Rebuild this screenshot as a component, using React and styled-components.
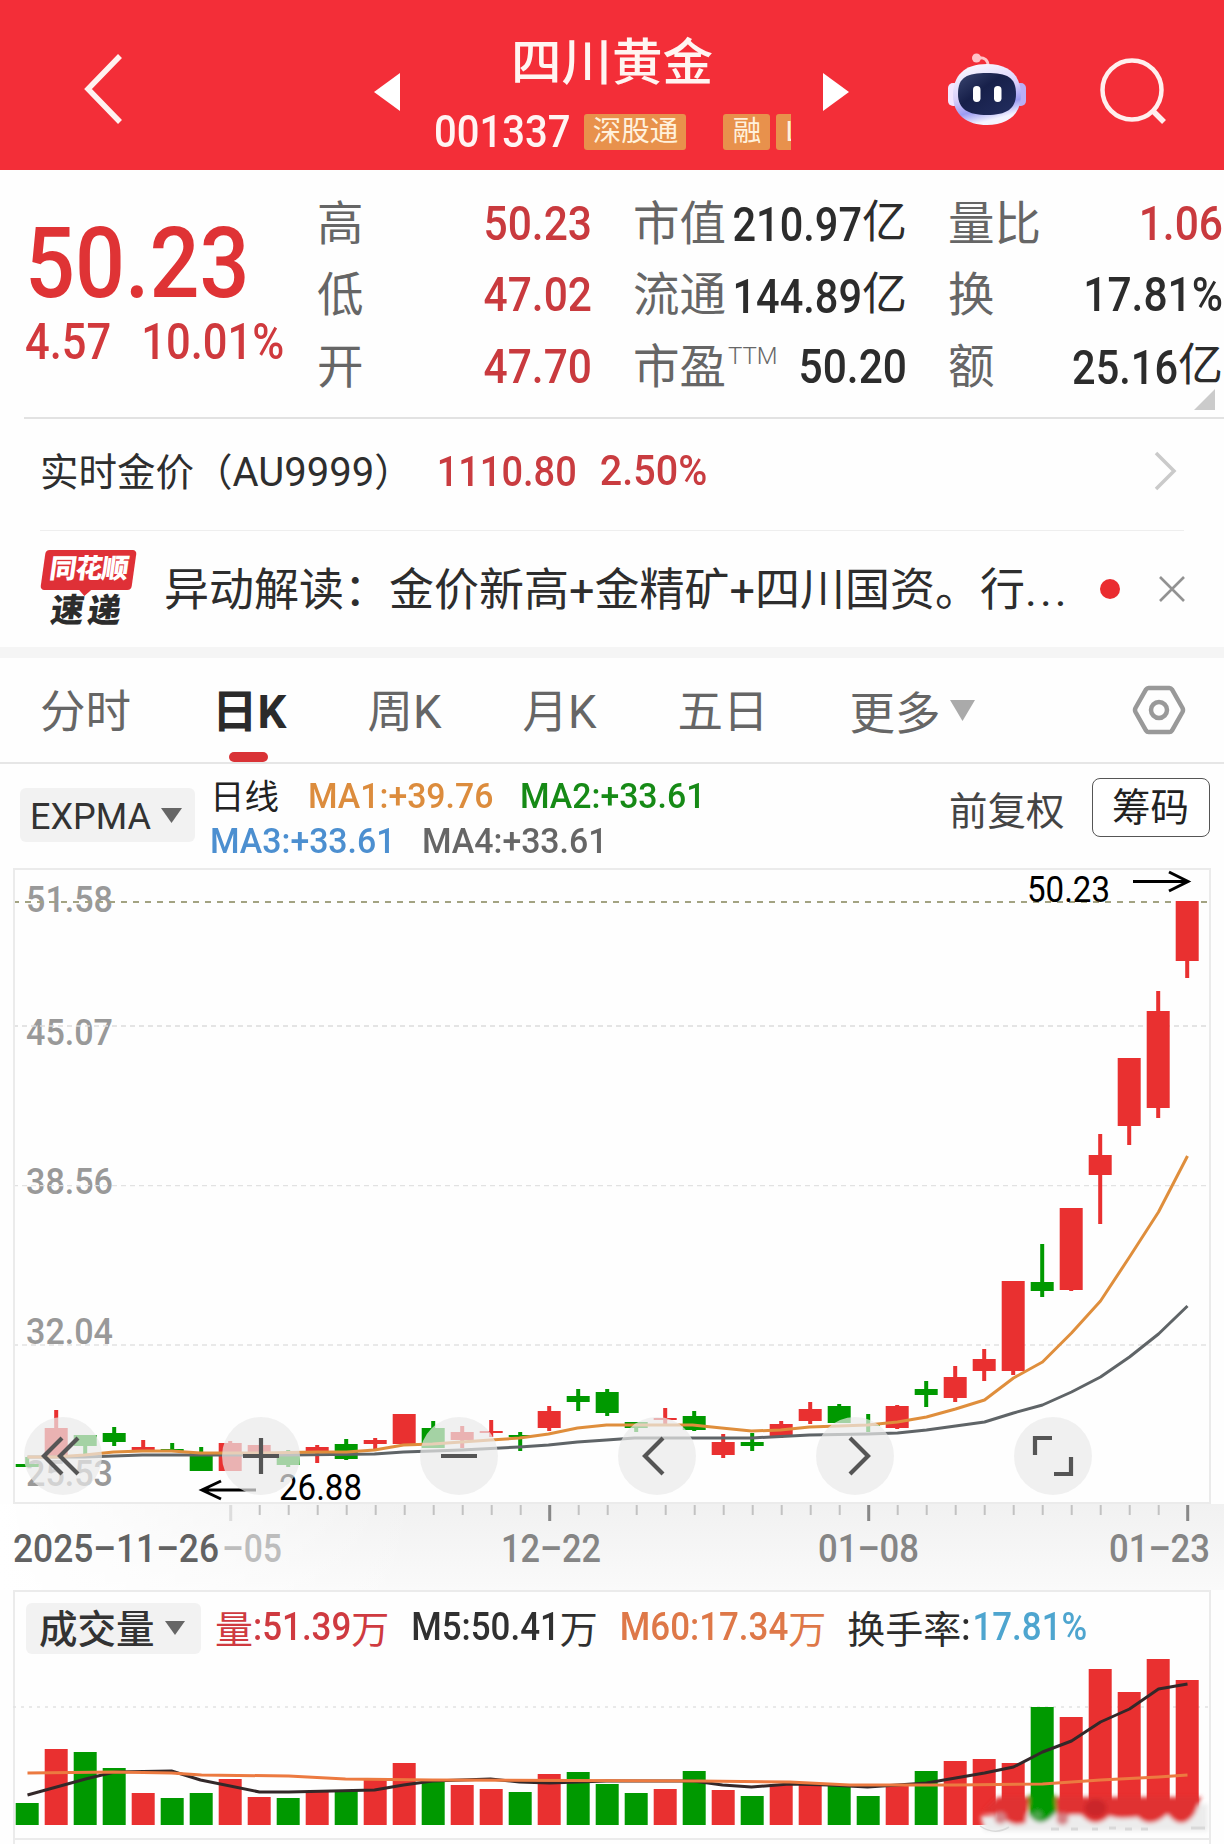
import React from "react";
import styled, { createGlobalStyle } from "styled-components";

const RED = "#e93030";
const GREEN = "#009900";
const STEP = 29;
const FIRST = 14.2;

// [up, high, bodyTop, bodyBottom, low] in page pixels
const candles = [
  [0, 1457, 1464, 1467, 1467], [1, 1410, 1428, 1456, 1456], [0, 1435, 1435, 1446, 1455],
  [0, 1427, 1433, 1442, 1446], [1, 1440, 1447, 1450, 1450], [0, 1443, 1449, 1451, 1451],
  [0, 1447, 1452, 1471, 1471], [1, 1441, 1443, 1471, 1471], [1, 1445, 1445, 1457, 1457],
  [0, 1450, 1452, 1465, 1467], [1, 1445, 1447, 1452, 1463], [0, 1439, 1444, 1459, 1460],
  [1, 1438, 1440, 1444, 1450], [1, 1414, 1414, 1444, 1444], [0, 1421, 1428, 1448, 1448],
  [1, 1426, 1432, 1440, 1448], [1, 1420, 1431, 1433, 1437], [0, 1432, 1435, 1437, 1451],
  [1, 1406, 1411, 1428, 1431], [0, 1389, 1396, 1402, 1411], [0, 1389, 1392, 1413, 1416],
  [0, 1422, 1422, 1428, 1432], [1, 1408, 1418, 1420, 1425], [0, 1411, 1416, 1430, 1431],
  [1, 1434, 1442, 1455, 1458], [0, 1433, 1442, 1446, 1451], [1, 1421, 1424, 1437, 1438],
  [1, 1402, 1409, 1421, 1424], [0, 1404, 1406, 1423, 1423], [0, 1414, 1424, 1426, 1432],
  [1, 1405, 1406, 1428, 1429], [0, 1381, 1389, 1395, 1407], [1, 1366, 1377, 1398, 1402],
  [1, 1349, 1359, 1371, 1381], [1, 1281, 1281, 1371, 1375], [0, 1244, 1282, 1291, 1297],
  [1, 1208, 1208, 1290, 1291], [1, 1134, 1155, 1175, 1224], [1, 1058, 1058, 1126, 1145],
  [1, 991, 1011, 1108, 1118], [1, 901, 901, 961, 978],
];

// bar heights of the volume panel
const volumes = [
  22, 76, 73, 57, 32, 27, 32, 46, 28, 27, 33, 35, 47, 62, 44, 40, 36, 33, 51, 53, 41,
  32, 36, 54, 35, 29, 41, 41, 39, 29, 40, 54, 64, 66, 62, 118, 108, 156, 133, 166, 145,
];

const ma1 = "28,1457 56,1457 85,1455 114,1452 143,1451 172,1451 201,1453 260,1453 318,1452 347,1452 375,1450 404,1445 433,1444 462,1442 491,1440 520,1438 549,1434 578,1428 607,1425 693,1425 722,1428 752,1431 781,1430 810,1427 839,1426 868,1425 898,1422 927,1417 956,1409 985,1400 1014,1378 1043,1362 1072,1333 1101,1301 1130,1257 1159,1212 1188,1156";
const ma4 = "28,1457 85,1457 143,1455 289,1455 375,1454 404,1452 462,1450 520,1447 549,1445 578,1442 607,1440 635,1438 752,1438 810,1435 868,1434 898,1433 927,1430 956,1426 985,1422 1014,1413 1043,1405 1072,1392 1101,1377 1130,1357 1159,1334 1188,1306";
const m5 = "28,1795 86,1779 115,1772 172,1771 201,1780 260,1792 289,1792 375,1790 404,1785 433,1781 491,1779 520,1782 550,1783 607,1781 694,1781 723,1785 752,1787 790,1784 830,1785 868,1787 898,1785 927,1783 956,1778 985,1773 1014,1767 1043,1752 1072,1741 1101,1722 1130,1709 1159,1689 1188,1684";
const m60 = "28,1773 115,1772 172,1773 202,1775 289,1776 346,1779 433,1780 700,1781 790,1782 850,1785 956,1785 1043,1784 1101,1780 1159,1777 1188,1775";

const grid = [
  { y: 1026, color: "#dcdcdc" },
  { y: 1185.7, color: "#e2e2e2" },
  { y: 1345, color: "#e2e2e2" },
];
const scale = [["51.58", 899], ["45.07", 1031.5], ["38.56", 1181], ["32.04", 1331], ["25.53", 1472.5]];

const tabs = ["分时", "日K", "周K", "月K", "五日"];

const center = (i) => FIRST + i * STEP;

function ChartText({ x, y, width, size, fill, weight = 500, children }) {
  return (
    <text
      transform={`translate(${x} ${y}) scale(1 1.08)`}
      y={size * 0.355}
      fontSize={size}
      fontWeight={weight}
      fill={fill}
      textLength={width}
      lengthAdjust="spacingAndGlyphs"
    >
      {children}
    </text>
  );
}

function Header() {
  return (
    <Bar>
      <Back>
        <svg width="42" height="72" viewBox="0 0 42 72" fill="none" stroke="#fff2f0" strokeWidth="5.5">
          <path d="M37 3 L5 36 L37 69" />
        </svg>
      </Back>
      <Triangle viewBox="0 0 26 40"><path d="M26 1 V39 L0 20Z" /></Triangle>
      <TitleBlock>
        <StockName>四川黄金</StockName>
        <CodeRow>
          <Num $size={40} $color="#fff4f3" $stretch={1.13}>001337</Num>
          <Tag $left={14} $width={102}>深股通</Tag>
          <Tag $left={37} $width={47}>融</Tag>
          <CutTag>L</CutTag>
        </CodeRow>
      </TitleBlock>
      <Triangle viewBox="0 0 26 40"><path d="M0 1 V39 L26 20Z" /></Triangle>
      <Robot />
      <svg width="70" height="70" viewBox="0 0 70 70" fill="none" stroke="#ffefee" strokeWidth="4.5">
        <circle cx="34" cy="34" r="29.5" />
        <path d="M54 54 L66 66" strokeWidth="5.5" />
      </svg>
    </Bar>
  );
}

function Robot() {
  return (
    <RobotSvg width="78" height="74" viewBox="0 0 78 74">
      <defs>
        <linearGradient id="shell" x1="0" y1="0" x2="0.3" y2="1">
          <stop offset="0" stopColor="#fff" />
          <stop offset="0.55" stopColor="#d9d0fb" />
          <stop offset="0.8" stopColor="#9c9cf2" />
          <stop offset="1" stopColor="#f4f4ff" />
        </linearGradient>
        <linearGradient id="visor" x1="0" y1="0" x2="1" y2="1">
          <stop offset="0" stopColor="#3a4570" />
          <stop offset="0.4" stopColor="#17204a" />
          <stop offset="1" stopColor="#232e60" />
        </linearGradient>
      </defs>
      <path d="M29 6 C37 5 40 8 40 14" fill="none" stroke="#ffc3c8" strokeWidth="3" />
      <circle cx="28.5" cy="6" r="4.5" fill="#ffc3c8" />
      <rect x="0" y="31" width="11" height="23" rx="5" fill="#f3e6ff" />
      <rect x="67" y="31" width="11" height="23" rx="5" fill="#b9aef6" />
      <path d="M39 12 C62 12 73 24 73 43 C73 63 59 73 39 73 C19 73 5 63 5 43 C5 24 16 12 39 12Z" fill="url(#shell)" />
      <path d="M39 21 C59 21 68 25 68 42 C68 57 58 63 39 63 C20 63 10 57 10 42 C10 25 19 21 39 21Z" fill="url(#visor)" />
      <rect x="25" y="34" width="7.5" height="16" rx="3.7" fill="#fff" />
      <rect x="46" y="34" width="7.5" height="16" rx="3.7" fill="#fff" />
    </RobotSvg>
  );
}

function Quote() {
  return (
    <QuoteGrid>
      <PriceBlock>
        <Price><Num $size={88} $stretch={1.12} $color="#df3335">50.23</Num></Price>
        <Change>
          <Num $size={43.5} $stretch={1.14} $color="#d2393c">4.57</Num>
          <Num $size={43.5} $stretch={1.14} $color="#cf393d">10.01%</Num>
        </Change>
      </PriceBlock>
      <Stats>
        <Stat label="高" value="50.23" up />
        <Stat label="低" value="47.02" up />
        <Stat label="开" value="47.70" up />
      </Stats>
      <Stats>
        <Stat label="市值" value="210.97" unit="亿" />
        <Stat label="流通" value="144.89" unit="亿" />
        <Stat label="市盈" sup="TTM" value="50.20" />
      </Stats>
      <Stats>
        <Stat label="量比" value="1.06" up />
        <Stat label="换" value="17.81%" />
        <Stat label="额" value="25.16" unit="亿" />
      </Stats>
      <Corner viewBox="0 0 21 21"><path d="M21 0 V21 H0Z" fill="#cbcbcb" /></Corner>
    </QuoteGrid>
  );
}

function Stat({ label, sup, value, unit, up }) {
  return (
    <StatRow>
      <StatLabel>{label}{sup && <Sup>{sup}</Sup>}</StatLabel>
      <StatValue>
        <Num $size={unit ? 41.5 : 42.5} $stretch={unit ? 1.18 : 1.15} $color={up ? "#c93a3e" : "#2c2c2c"}>{value}</Num>
        {unit && <Unit>{unit}</Unit>}
      </StatValue>
    </StatRow>
  );
}

function PriceChart() {
  return (
    <ChartBox>
      <svg width="1197" height="636" viewBox="0 868 1197 636">
        {scale.map(([label, y]) => (
          <ChartText key={label} x={13} y={y} width={87} size={35} fill="#999">{label}</ChartText>
        ))}
        <path d="M0 902H1197" stroke="#a3a382" strokeWidth="2" strokeDasharray="6 6" />
        {grid.map((g) => (
          <path key={g.y} d={`M0 ${g.y}H1197`} stroke={g.color} strokeWidth="1.3" strokeDasharray="5 4" />
        ))}
        {candles.map(([up, high, top, bottom, low], i) => (
          <g key={i} fill={up ? RED : GREEN}>
            <rect x={center(i) - 2} y={high} width="4" height={low - high} />
            <rect x={center(i) - 11.5} y={top} width="23" height={bottom - top} />
          </g>
        ))}
        <g transform="translate(-13.5 0)" fill="none" strokeWidth="3" strokeLinejoin="round">
          <polyline points={ma4} stroke="#5f6467" />
          <polyline points={ma1} stroke="#df8e3c" />
        </g>
        <g fill="none" stroke="#000" strokeWidth="3">
          <path d="M1120 881.5H1174 M1156 872 L1175 881.5 L1156 891" />
          <path d="M243 1490H190 M208 1481 L189 1490 L208 1499" />
        </g>
        <ChartText x={1014} y={889} width={83} size={34} weight={400} fill="#000">50.23</ChartText>
        <ChartText x={266} y={1487} width={83} size={34} weight={400} fill="#000">26.88</ChartText>
      </svg>
      <Controls>
        <Control><path d="M38 21 L20 39 L38 57 M54 21 L36 39 L54 57" /></Control>
        <Control><path d="M39 21V57 M21 39H57" /></Control>
        <Control><path d="M21 39H57" /></Control>
        <Control><path d="M45 21 L27 39 L45 57" /></Control>
        <Control><path d="M34 21 L52 39 L34 57" /></Control>
        <Control><path d="M21 38V21H38 M57 40V57H40" /></Control>
      </Controls>
    </ChartBox>
  );
}

function Control({ children }) {
  return (
    <ControlButton>
      <svg width="78" height="78" fill="none" stroke="#555" strokeWidth="4.2">{children}</svg>
    </ControlButton>
  );
}

function Axis() {
  return (
    <AxisBand>
      <svg width="1224" height="84" viewBox="0 0 1224 84">
        {candles.map((c, i) => {
          if (i < 7) return null;
          const major = (i - 7) % 11 === 0;
          return (
            <rect
              key={i}
              x={center(i) + 13.5 - (major ? 1.5 : 1)}
              y="1"
              width={major ? 3 : 2}
              height={major ? 16 : 10}
              fill={i === 7 ? "#ddd" : major ? "#888" : "#c2c2c2"}
            />
          );
        })}
        <ChartText x={222} y={44} width={60} size={36} fill="#bdbdbd">–05</ChartText>
        <ChartText x={13} y={44} width={206} size={36} fill="#626262">2025–11–26</ChartText>
        <ChartText x={501} y={44} width={100} size={36} fill="#858585">12–22</ChartText>
        <ChartText x={818} y={44} width={101} size={36} fill="#858585">01–08</ChartText>
        <ChartText x={1109} y={44} width={101} size={36} fill="#858585">01–23</ChartText>
      </svg>
    </AxisBand>
  );
}

function VolumeChart() {
  return (
    <VolumeSvg width="1197" height="182" viewBox="0 1656 1197 182">
      <defs>
        <filter id="soft"><feGaussianBlur stdDeviation="2" /></filter>
      </defs>
      <path d="M0 1707H1197" stroke="#e2e2e2" strokeWidth="1.5" strokeDasharray="3 5" />
      {volumes.map((h, i) => (
        <rect key={i} x={center(i) - 11.5} y={1825 - h} width="23" height={h} fill={candles[i][0] ? RED : GREEN} />
      ))}
      <g transform="translate(-13.5 0)" fill="none" strokeWidth="3" strokeLinejoin="round">
        <polyline points={m5} stroke="#332829" />
        <polyline points={m60} stroke="#ec7a40" />
      </g>
      {/* smeared strip under the last bars */}
      <g transform="translate(-13.5 0)" filter="url(#soft)">
        <path d="M981 1816 L1208 1804 V1831 H985Z" fill="#ececec" />
        <path d="M998 1797 H1202 L1195 1814 Q1182 1832 1168 1814 Q1151 1830 1138 1817 Q1120 1820 1110 1816 Q1095 1830 1082 1815 Q1066 1814 1058 1819 L1056 1797 H1030 L1026 1823 Q1012 1828 1002 1816 L984 1811Z" fill="#e03033" />
        <path d="M1029 1795 H1056 L1057 1812 Q1040 1831 1030 1815Z" fill={GREEN} />
        <ellipse cx="1096" cy="1808" rx="11" ry="9" fill="#ca272c" />
        <circle cx="1038" cy="1816" r="5" fill="#4da64d" />
        <circle cx="1063" cy="1819" r="6" fill="#d58084" />
        <circle cx="1001" cy="1818" r="6" fill="#d58084" />
      </g>
      <g fill="none" stroke="#d9d9d9" strokeWidth="1.5">
        <path d="M967 1826 Q982 1836 996 1827" />
        <path d="M1038 1829h8 M1058 1829h7 M1079 1829h6 M1096 1828h7 M1112 1829h7 M1128 1829h7 M1178 1828h14" strokeWidth="3" />
      </g>
    </VolumeSvg>
  );
}

export default function App() {
  return (
    <Page>
      <GlobalStyle />
      <Header />
      <Quote />
      <GoldRow>
        <GoldName>实时金价（<span>AU9999</span>）</GoldName>
        <Num $size={38} $stretch={1.13} $color="#c93c40">1110.80</Num>
        <Num $size={39.5} $stretch={1.1} $color="#c93c40">2.50%</Num>
        <Arrow width="24" height="40" viewBox="0 0 24 40"><path d="M2 2 L20 20 L2 38" /></Arrow>
      </GoldRow>
      <NewsRow>
        <Logo>
          <LogoTop>同花顺</LogoTop>
          <LogoBottom>速递</LogoBottom>
        </Logo>
        <NewsText>异动解读：金价新高+金精矿+四川国资。行<i>...</i></NewsText>
        <Dot />
        <svg width="26" height="26" viewBox="0 0 26 26" stroke="#929292" strokeWidth="2.6">
          <path d="M1 1 L25 25 M25 1 L1 25" />
        </svg>
      </NewsRow>
      <Tabs>
        {tabs.map((tab) => (
          <Tab key={tab} $active={tab === "日K"}>{tab}</Tab>
        ))}
        <More>
          更多
          <svg width="25" height="21" viewBox="0 0 25 21"><path d="M0 0H25L12.5 21Z" fill="#aaa" /></svg>
        </More>
        <Settings width="54" height="50" viewBox="0 0 54 50" fill="none" stroke="#999" strokeWidth="4.5">
          <path d="M16.5 3H37.5Q39 3 40 4.5L50.5 23Q51.5 25 50.5 27L40 45.5Q39 47 37.5 47H16.5Q15 47 14 45.5L3.5 27Q2.5 25 3.5 23L14 4.5Q15 3 16.5 3Z" />
          <circle cx="27" cy="25" r="8" />
        </Settings>
      </Tabs>
      <Indicators>
        <IndicatorSelect>
          <span>EXPMA</span>
          <svg width="21" height="15" viewBox="0 0 21 15"><path d="M0 0H21L10.5 15Z" fill="#666" /></svg>
        </IndicatorSelect>
        <Legend>
          <LegendLine>
            <LegendName>日线</LegendName>
            <MaText $color="#dc8c3d" $width={212}>MA1:+39.76</MaText>
            <MaText $color="#168a16">MA2:+33.61</MaText>
          </LegendLine>
          <LegendLine>
            <MaText $color="#4c8fd0" $width={212}>MA3:+33.61</MaText>
            <MaText $color="#666">MA4:+33.61</MaText>
          </LegendLine>
        </Legend>
        <Adjust>前复权</Adjust>
        <ChipButton>筹码</ChipButton>
      </Indicators>
      <PriceChart />
      <Axis />
      <VolumePanel>
        <VolumeHead>
          <VolumeSelect>
            <span>成交量</span>
            <svg width="20" height="14" viewBox="0 0 20 14"><path d="M0 0H20L10 14Z" fill="#666" /></svg>
          </VolumeSelect>
          <VolItem $color="#cf3a40" $left={14}>量<VolNum>:51.39</VolNum>万</VolItem>
          <VolItem $color="#303030" $left={22}><VolNum>M5:50.41</VolNum>万</VolItem>
          <VolItem $color="#de7848" $left={22}><VolNum>M60:17.34</VolNum>万</VolItem>
          <VolItem $color="#2c2c2c" $left={21}>换手率<VolNum>:</VolNum></VolItem>
          <VolItem $color="#4ea5cf" $left={2}><VolNum>17.81%</VolNum></VolItem>
        </VolumeHead>
        <VolumeChart />
      </VolumePanel>
      <NextPanel />
    </Page>
  );
}

const GlobalStyle = createGlobalStyle`
  * {
    box-sizing: border-box;
  }
  body {
    margin: 0;
    background: #fff;
    font-family: Roboto, "Noto Sans CJK SC", sans-serif;
  }
  svg {
    display: block;
    flex-shrink: 0;
  }
`;

const Page = styled.div`
  width: 1224px;
  height: 1844px;
  overflow: hidden;
  background: #fefefe;
  white-space: nowrap;
`;

const Num = styled.span`
  display: inline-block;
  font-size: ${(p) => p.$size}px;
  font-weight: 500;
  line-height: 1;
  color: ${(p) => p.$color || "inherit"};
  transform: scaleY(${(p) => p.$stretch});
`;

const Bar = styled.header`
  display: flex;
  align-items: center;
  height: 170px;
  padding-top: 12px;
  background: #f32e38;
`;

const Back = styled.div`
  width: 374px;
  padding: 0 0 4px 83px;
`;

const Triangle = styled.svg`
  width: 26px;
  height: 40px;
  margin-top: 1px;
  fill: #fff;
`;

const TitleBlock = styled.div`
  width: 423px;
  height: 158px;
`;

const StockName = styled.div`
  height: 99px;
  padding-left: 1px;
  line-height: 102px;
  text-align: center;
  font-size: 50.5px;
  font-weight: 500;
  color: #fff5f2;
`;

const CodeRow = styled.div`
  display: flex;
  align-items: center;
  height: 42px;
  margin-left: 34px;
`;

const Tag = styled.span`
  width: ${(p) => p.$width}px;
  height: 36px;
  margin-left: ${(p) => p.$left}px;
  border-radius: 3px;
  background: #e8914c;
  color: #fff1dc;
  font-size: 28.5px;
  line-height: 35px;
  text-align: center;
`;

const CutTag = styled(Tag)`
  width: 15px;
  margin-left: 6px;
  padding-left: 9px;
  border-radius: 3px 0 0 3px;
  overflow: hidden;
  text-align: left;
`;

const RobotSvg = styled.svg`
  margin: 0 72px 5px 99px;
`;

const QuoteGrid = styled.section`
  position: relative;
  display: grid;
  grid-template-columns: 252px 275px 274px 275px;
  column-gap: 41px;
  height: 249px;
  margin-left: 24px;
  padding-top: 16px;
  border-bottom: 2px solid #e2e2e2;
`;

const PriceBlock = styled.div`
  display: flex;
  flex-direction: column;
`;

const Price = styled.div`
  display: flex;
  align-items: center;
  height: 135px;
  padding: 18px 0 0 1px;
`;

const Change = styled.div`
  display: flex;
  gap: 30px;
  margin-left: 1px;
`;

const Stats = styled.div`
  display: flex;
  flex-direction: column;
`;

const StatRow = styled.div`
  display: flex;
  align-items: center;
  justify-content: space-between;
  height: 71.5px;
`;

const StatLabel = styled.span`
  display: flex;
  align-items: center;
  padding-bottom: 5px;
  color: #666;
  font-size: 46.5px;
`;

const Sup = styled.sup`
  margin: -12px 0 0 2px;
  font-size: 24px;
  font-weight: 300;
  line-height: 1;
`;

const StatValue = styled.span`
  display: flex;
  align-items: center;
  padding-top: 4px;
`;

const Unit = styled.span`
  padding-bottom: 2px;
  font-size: 45px;
  line-height: 1;
  color: #2c2c2c;
`;

const Corner = styled.svg`
  position: absolute;
  right: 9px;
  bottom: 7px;
  width: 21px;
  height: 21px;
`;

const GoldRow = styled.section`
  display: flex;
  align-items: center;
  height: 112px;
  margin: 0 40px;
  padding-bottom: 7px;
  border-bottom: 1.5px solid #eee;

  > span:nth-of-type(1) {
    margin-left: 24px;
  }
  > span:nth-of-type(2) {
    margin-left: 23px;
  }
`;

const GoldName = styled.div`
  padding-bottom: 5px;
  font-size: 38.5px;
  color: #2e2e2e;

  span {
    font-size: 40px;
  }
`;

const Arrow = styled.svg`
  margin-left: auto;
  margin-right: 6px;
  fill: none;
  stroke: #cacaca;
  stroke-width: 3.5;
`;

const NewsRow = styled.section`
  display: flex;
  align-items: center;
  height: 127px;
  padding-left: 40px;
  border-bottom: 11px solid #f5f5f5;
`;

const Logo = styled.div`
  width: 97px;
  height: 79px;
  margin-right: 27px;
`;

const LogoTop = styled.div`
  position: relative;
  width: 91px;
  height: 40px;
  margin-left: 3px;
  border-radius: 4px;
  background: #df3037;
  color: #fff;
  font-size: 27px;
  font-weight: 900;
  line-height: 39px;
  letter-spacing: -1px;
  text-align: center;
  transform: skewX(-8deg);

  &::after {
    content: "";
    position: absolute;
    left: 38px;
    top: 39px;
    border: 7px solid transparent;
    border-top-color: #df3037;
    border-bottom: 0;
  }
`;

const LogoBottom = styled.div`
  margin: 4px 0 0 11px;
  color: #2c2c2c;
  font-size: 33px;
  font-weight: 900;
  line-height: 34px;
  letter-spacing: 4px;
  transform: skewX(-8deg);
`;

const NewsText = styled.div`
  width: 936px;
  padding-bottom: 6px;
  font-size: 45px;
  color: #2d2d2d;

  i {
    font-style: normal;
    letter-spacing: 3px;
  }
`;

const Dot = styled.span`
  width: 20px;
  height: 20px;
  margin-right: 39px;
  border-radius: 50%;
  background: #ea2c30;
`;

const Tabs = styled.nav`
  display: flex;
  align-items: center;
  height: 106px;
  padding-left: 40px;
  border-bottom: 2px solid #e6e6e6;
  font-size: 45.5px;
  color: #666;
`;

const Tab = styled.span`
  position: relative;
  height: 104px;
  margin-right: 81px;
  line-height: 110px;
  ${(p) => p.$active && "font-weight: 700; color: #2b2b2b;"}

  &::after {
    content: "";
    display: ${(p) => (p.$active ? "block" : "none")};
    position: absolute;
    left: 17px;
    bottom: 0;
    width: 39px;
    height: 10px;
    border-radius: 5px;
    background: #d93236;
  }
`;

const More = styled.span`
  display: flex;
  align-items: center;
  gap: 9px;
`;

const Settings = styled.svg`
  margin: 0 38px 0 auto;
`;

const Indicators = styled.section`
  display: flex;
  height: 104px;
  padding-left: 20px;
`;

const Select = styled.div`
  display: flex;
  align-items: center;
  width: 175px;
  border-radius: 6px;
  background: #f2f2f2;
  color: #333;
`;

const IndicatorSelect = styled(Select)`
  gap: 10px;
  height: 54px;
  margin-top: 24px;
  padding: 0 0 0 10px;
  font-size: 36px;

  span {
    padding-top: 3px;
  }
`;

const VolumeSelect = styled(Select)`
  gap: 10px;
  height: 51px;
  padding-left: 13px;
  font-size: 38.5px;
  font-weight: 500;

  span {
    padding-bottom: 4px;
  }
`;

const Legend = styled.div`
  width: 740px;
  padding: 10px 0 0 15px;
`;

const LegendLine = styled.div`
  display: flex;
  align-items: center;
  height: 45px;
`;

const LegendName = styled.span`
  width: 98px;
  padding-bottom: 5px;
  font-size: 34.5px;
  color: #222;
`;

const MaText = styled.span`
  width: ${(p) => p.$width || 184}px;
  padding-bottom: 2px;
  font-size: 33.8px;
  font-weight: 500;
  color: ${(p) => p.$color};
  transform: scaleY(1.06);
`;

const Adjust = styled.span`
  margin: 16px 27px 0 14px;
  font-size: 38.5px;
  color: #444;
`;

const ChipButton = styled.button`
  width: 118px;
  height: 59px;
  margin-top: 14px;
  padding: 0;
  border: 1.5px solid #555;
  border-radius: 8px;
  background: #fff;
  color: #222;
  font: inherit;
  font-size: 38.5px;
  line-height: 56px;
`;

const ChartBox = styled.section`
  position: relative;
  width: 1198px;
  height: 636px;
  margin-left: 13px;
  outline: 2px solid #ebebeb;
  outline-offset: -2px;
`;

const Controls = styled.div`
  position: absolute;
  left: 10.5px;
  bottom: 9px;
  display: flex;
  gap: 120px;
`;

const ControlButton = styled.button`
  width: 78px;
  height: 78px;
  padding: 0;
  border: 0;
  border-radius: 50%;
  background: rgba(233, 233, 233, 0.7);
`;

const AxisBand = styled.div`
  height: 86px;
  background: linear-gradient(to right, #fff 0, rgba(255, 255, 255, 0) 420px),
    linear-gradient(#f1f1f1, #fafafa);
`;

const VolumePanel = styled.section`
  width: 1198px;
  height: 248px;
  margin-left: 13px;
  border: 2px solid #ebebeb;
  border-bottom: 0;
`;

const VolumeHead = styled.div`
  display: flex;
  align-items: center;
  height: 64px;
  padding: 8px 0 0 11px;
`;

const VolItem = styled.span`
  display: flex;
  align-items: center;
  padding-bottom: 4px;
  margin-left: ${(p) => p.$left}px;
  color: ${(p) => p.$color};
  font-size: 38px;
`;

const VolNum = styled(Num)`
  margin-top: 5px;
  font-size: 34.9px;
  transform: scaleY(1.1);
`;

const VolumeSvg = styled.svg`
  margin-left: -2px;
`;

const NextPanel = styled.div`
  width: 1198px;
  height: 10px;
  margin-left: 13px;
  border: 2px solid #ebebeb;
`;
